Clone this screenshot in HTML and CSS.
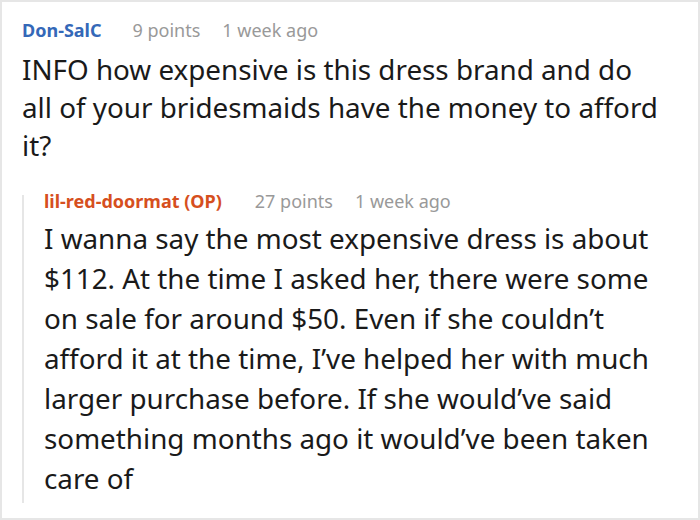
FILE: index.html
```html
<!DOCTYPE html>
<html>
<head>
<meta charset="utf-8">
<link rel="stylesheet" href="styles.css">
</head>
<body>
<div class="frame">
  <div class="comment">
    <div class="meta"><span class="author blue">Don-SalC</span><span class="points">9 points</span><span class="time">1 week ago</span></div>
    <div class="body">INFO how expensive is this dress brand and do all of your bridesmaids have the money to afford it?</div>
    <div class="reply">
      <div class="meta reply-meta"><span class="author orange">lil-red-doormat (OP)</span><span class="points">27 points</span><span class="time">1 week ago</span></div>
      <div class="body reply-body">I wanna say the most expensive dress is about $112. At the time I asked her, there were some on sale for around $50. Even if she couldn’t afford it at the time, I’ve helped her with much larger purchase before. If she would’ve said something months ago it would’ve been taken care of</div>
    </div>
  </div>
</div>
</body>
</html>
```
FILE: styles.css
```css
html, body { margin: 0; padding: 0; background: #fff; }
.frame {
  width: 700px;
  height: 520px;
  box-sizing: border-box;
  border: 2px solid #e6e6e6;
  padding: 15px 30px 0 20px;
  font-family: "Noto Sans", "Open Sans", sans-serif;
  color: #1a1a1a;
  overflow: hidden;
}
.meta {
  font-size: 18px;
  line-height: 26px;
  color: #999;
  display: flex;
  align-items: baseline;
}
.author { font-weight: 700; margin-right: 31px; }
.blue { color: #3468b8; }
.orange { color: #d64f1e; }
.points { margin-right: 22px; }
.body {
  font-size: 27.8px;
  line-height: 38px;
  margin-top: 7px;
}
.reply {
  margin-top: 31px;
  border-left: 2px solid #e6e6e6;
  padding-left: 20px;
  padding-bottom: 5px;
}
.reply-meta { line-height: 12px; }
.reply-meta .author { margin-right: 33px; }
.reply-body { line-height: 40px; margin-top: 11px; }
```
